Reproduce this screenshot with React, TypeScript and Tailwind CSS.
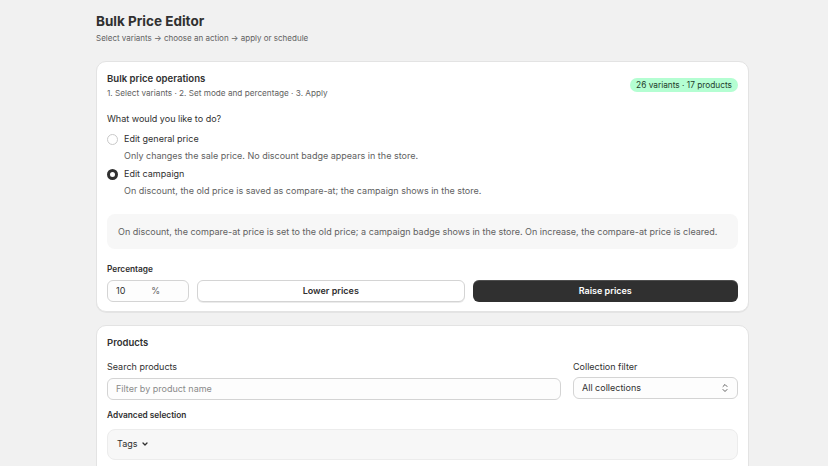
import React, { useState } from 'react';

const font = { fontFamily: 'Inter, "Noto Sans", sans-serif' };

const Radio: React.FC<{ checked: boolean; label: string; desc: string; onSelect: () => void }> = ({
  checked,
  label,
  desc,
  onSelect,
}) => (
  <div className="flex flex-col">
    <button onClick={onSelect} className="flex items-center gap-[6px] h-[18px] text-left">
      {checked ? (
        <span className="w-[11px] h-[11px] rounded-full border-[3px] border-[#303030] bg-white" />
      ) : (
        <span className="w-[11px] h-[11px] rounded-full border border-[#c9c9c9] bg-white" />
      )}
      <span className="text-[9px] text-[#303030]">{label}</span>
    </button>
    <p className="pl-[17px] text-[9px] text-[#616161] leading-[16px]">{desc}</p>
  </div>
);

const App: React.FC = () => {
  const [mode, setMode] = useState<'general' | 'campaign'>('campaign');
  const [pct, setPct] = useState('10');

  return (
    <div className="min-h-screen bg-[#f1f1f1] text-[#303030]" style={font}>
      <div className="w-[653px] ml-[96px] pt-[11px] pb-8">
        {/* Header */}
        <h1 className="text-[13.5px] font-bold leading-[20px] text-[#303030]">Bulk Price Editor</h1>
        <p className="text-[8px] text-[#616161] leading-[14px]">Select variants → choose an action → apply or schedule</p>

        {/* Operations card */}
        <section className="mt-[16px] bg-white rounded-[10px] border border-[#e3e3e3] shadow-[0_1px_0_rgba(0,0,0,0.05)] px-[10px] pt-[10px] pb-[9px]">
          <div className="flex justify-between items-start">
            <div>
              <h2 className="text-[9.6px] font-semibold leading-[14px]">Bulk price operations</h2>
              <p className="text-[8.2px] text-[#616161] leading-[14px]">1. Select variants · 2. Set mode and percentage · 3. Apply</p>
            </div>
            <span className="mt-[6px] px-[6px] h-[14px] flex items-center rounded-full bg-[#b4fed2] text-[8.3px] text-[#1f3d2c]">
              26 variants · 17 products
            </span>
          </div>

          <p className="mt-[12px] text-[9px] leading-[14px]">What would you like to do?</p>
          <div className="mt-[4px] flex flex-col gap-[1px]">
            <Radio
              checked={mode === 'general'}
              label="Edit general price"
              desc="Only changes the sale price. No discount badge appears in the store."
              onSelect={() => setMode('general')}
            />
            <Radio
              checked={mode === 'campaign'}
              label="Edit campaign"
              desc="On discount, the old price is saved as compare-at; the campaign shows in the store."
              onSelect={() => setMode('campaign')}
            />
          </div>

          <div className="mt-[15px] h-[35px] flex items-center px-[11px] rounded-[8px] bg-[#f7f7f7] text-[9px] text-[#616161]">
            On discount, the compare-at price is set to the old price; a campaign badge shows in the store. On increase, the compare-at price is cleared.
          </div>

          <p className="mt-[13px] text-[8.3px] font-semibold leading-[14px]">Percentage</p>
          <div className="mt-[4px] flex gap-[8px]">
            <div className="w-[82px] h-[22px] flex items-center justify-between pl-[8px] pr-[28px] rounded-[6px] border border-[#d4d4d4] bg-[#fdfdfd]">
              <input
                value={pct}
                onChange={(e) => setPct(e.target.value)}
                className="w-[24px] text-[9px] bg-transparent outline-none"
              />
              <span className="text-[9px] text-[#616161]">%</span>
            </div>
            <button className="flex-1 h-[22px] rounded-[6px] border border-[#d4d4d4] bg-white text-[9px] font-semibold text-[#303030] shadow-[0_1px_0_rgba(0,0,0,0.08)]">
              Lower prices
            </button>
            <button className="flex-1 h-[22px] rounded-[6px] bg-[#303030] text-[9px] font-semibold text-white shadow-[inset_0_1px_0_rgba(255,255,255,0.15)]">
              Raise prices
            </button>
          </div>
        </section>

        {/* Products card */}
        <section className="mt-[13px] bg-white rounded-[10px] border border-[#e3e3e3] px-[10px] pt-[10px] pb-[9px]">
          <h2 className="text-[9.5px] font-semibold leading-[14px]">Products</h2>
          <div className="mt-[10px] flex gap-[12px]">
            <div className="flex-1">
              <p className="text-[9px] leading-[14px]">Search products</p>
              <input
                placeholder="Filter by product name"
                className="mt-[3px] w-full h-[22px] px-[8px] rounded-[6px] border border-[#d4d4d4] bg-[#fdfdfd] text-[9px] outline-none placeholder:text-[#8a8a8a]"
              />
            </div>
            <div className="w-[165px]">
              <p className="text-[9px] leading-[14px]">Collection filter</p>
              <div className="mt-[3px] h-[22px] flex items-center justify-between px-[8px] rounded-[6px] border border-[#d4d4d4] bg-[#fdfdfd] text-[9px]">
                <span>All collections</span>
                <svg width="8" height="10" viewBox="0 0 8 10" fill="none" stroke="#616161" strokeWidth="1" strokeLinecap="round" strokeLinejoin="round">
                  <path d="M2 3.5 L4 1.5 L6 3.5" />
                  <path d="M2 6.5 L4 8.5 L6 6.5" />
                </svg>
              </div>
            </div>
          </div>
          <p className="mt-[8px] text-[8.3px] font-semibold leading-[14px]">Advanced selection</p>
          <div className="mt-[7px] h-[31px] flex items-center gap-[4px] px-[9px] rounded-[8px] bg-[#f7f7f7] border border-[#ececec] text-[9px]">
            <span>Tags</span>
            <svg width="8" height="8" viewBox="0 0 8 8" fill="none" stroke="#303030" strokeWidth="1.3" strokeLinecap="round" strokeLinejoin="round">
              <path d="M2 3 L4 5 L6 3" />
            </svg>
          </div>
          <div className="h-[60px]" />
        </section>
      </div>
    </div>
  );
};

export default App;
